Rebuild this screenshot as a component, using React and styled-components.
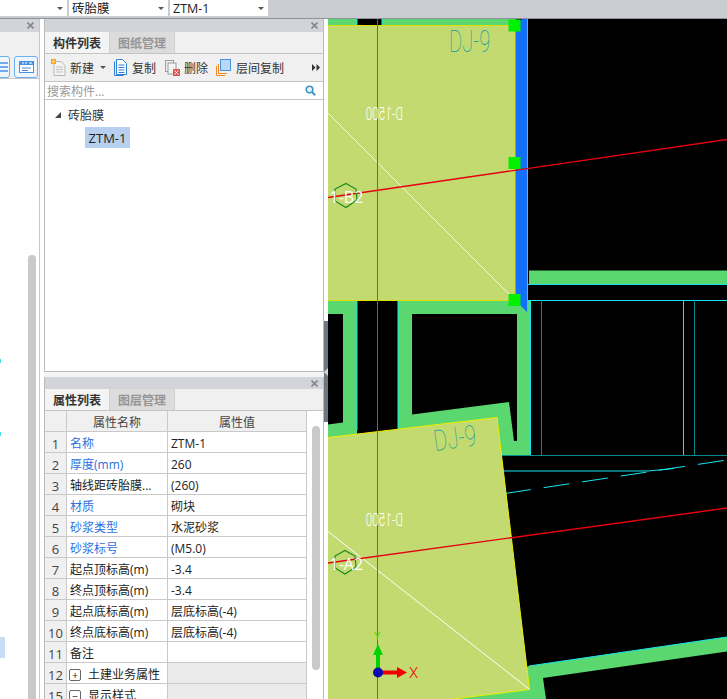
import React from "react";
import styled, { createGlobalStyle } from "styled-components";

const GlobalStyle = createGlobalStyle`
  html, body {
    margin: 0;
    padding: 0;
    background: #fff;
    overflow: hidden;
  }
`;

const FONT = `"Open Sans", "Noto Sans CJK SC", sans-serif`;

const Root = styled.div`
  width: 727px;
  height: 699px;
  overflow: hidden;
  display: flex;
  flex-direction: column;
  font-family: ${FONT};
  font-size: 12px;
  color: #222;
`;
const TopBar = styled.div`
  height: 19px;
  box-sizing: border-box;
  flex-shrink: 0;
  display: flex;
  gap: 2px;
  background: #c9ccd0;
  border-bottom: 1px solid #8f929a;
`;
const Combo = styled.div`
  width: ${(p) => p.$w}px;
  box-sizing: border-box;
  padding-left: 3px;
  background: #fff;
  display: flex;
  align-items: center;
  justify-content: space-between;
  font-size: 12.5px;
  line-height: 15px;
  height: 16px;
  overflow: hidden;
`;
const Caret = styled.span`
  width: 0;
  height: 0;
  margin-right: 4px;
  border-left: 3px solid transparent;
  border-right: 3px solid transparent;
  border-top: 3px solid #555;
`;
const Body = styled.div`
  flex: 1;
  display: flex;
  min-height: 0;
`;
const LeftPanel = styled.div`
  width: 40px;
  box-sizing: border-box;
  flex-shrink: 0;
  border-right: 1px solid #c8c8c8;
  display: flex;
  flex-direction: column;
`;
const TitleBar = styled.div`
  height: ${(p) => p.$h || 13}px;
  flex-shrink: 0;
  background: #d2d4d9;
  display: flex;
  align-items: center;
  justify-content: flex-end;
  padding-right: 5px;
  svg {
    display: block;
  }
`;
const LeftTools = styled.div`
  height: 47px;
  flex-shrink: 0;
  box-sizing: border-box;
  background: #f0f0f0;
  border-bottom: 1px solid #c4c4c4;
  padding: 24px 1px 0 0;
  display: flex;
  justify-content: flex-end;
  gap: 4px;
  overflow: hidden;
`;
const ToolButton = styled.div`
  width: ${(p) => p.$w}px;
  height: 22px;
  flex-shrink: 0;
  box-sizing: border-box;
  border: 1px solid #6db0f2;
  border-radius: 3px;
  background: #eef5fd;
  display: flex;
  align-items: center;
  justify-content: center;
`;
const LeftList = styled.div`
  flex: 1;
  position: relative;
  background: #fff;
`;
const LeftScrollThumb = styled.div`
  position: absolute;
  top: 176px;
  bottom: 0;
  left: 28px;
  width: 8px;
  border-radius: 4px 4px 0 0;
  background: #c9c9c9;
`;
const LeftSelection = styled.div`
  position: absolute;
  top: 558px;
  left: 0;
  width: 5px;
  height: 21px;
  background: #c9dcf5;
`;
const CyanTick = styled.div`
  position: absolute;
  top: ${(p) => p.$top}px;
  left: 0;
  width: 1px;
  height: 4px;
  background: #3fe5f2;
`;
const Gutter = styled.div`
  width: 4px;
  flex-shrink: 0;
  background: #fff;
`;
const MiddleColumn = styled.div`
  width: 280px;
  flex-shrink: 0;
  display: flex;
  flex-direction: column;
`;
const Panel = styled.div`
  display: flex;
  flex-direction: column;
  flex: ${(p) => (p.$grow ? 1 : "none")};
  min-height: 0;
  height: ${(p) => (p.$h ? `${p.$h}px` : "auto")};
  box-sizing: border-box;
  border-left: 1px solid #b9b9b9;
  border-right: 1px solid #b9b9b9;
`;
const TabRow = styled.div`
  height: 22px;
  box-sizing: border-box;
  flex-shrink: 0;
  display: flex;
  background: #f0f0f0;
  border-bottom: 1px solid #c4c4c4;
`;
const Tab = styled.div`
  width: 65px;
  box-sizing: border-box;
  display: flex;
  align-items: center;
  justify-content: center;
  font-weight: 700;
  color: ${(p) => (p.$active ? "#333" : "#959595")};
  background: ${(p) => (p.$active ? "#f4f4f4" : "#dcdcdc")};
  border-right: 1px solid #cfcfcf;
`;
const Toolbar = styled.div`
  height: 28px;
  flex-shrink: 0;
  box-sizing: border-box;
  display: flex;
  align-items: center;
  padding: 0 3px 0 6px;
  background: #f0f0f0;
  border-bottom: 1px solid #c4c4c4;
  color: #333;
`;
const ToolItem = styled.div`
  display: flex;
  align-items: center;
  gap: ${(p) => p.$gap ?? 5}px;
  margin-left: ${(p) => p.$ml ?? 0}px;
  margin-right: ${(p) => p.$mr ?? 8}px;
`;
const MoreIcon = styled.div`
  margin-left: auto;
  margin-right: 0;
  display: flex;
`;
const SearchRow = styled.div`
  height: 18px;
  flex-shrink: 0;
  box-sizing: border-box;
  background: #fff;
  border-bottom: 1px solid #c4c4c4;
  display: flex;
  align-items: center;
  justify-content: space-between;
  padding: 0 7px 0 2px;
  color: #9a9a9a;
`;
const Tree = styled.div`
  flex: 1;
  box-sizing: border-box;
  background: #fff;
  border-bottom: 1px solid #b9b9b9;
  padding-top: 6px;
`;
const TreeRow = styled.div`
  height: 18px;
  display: flex;
  align-items: center;
  padding-left: 10px;
  gap: 7px;
  color: #333;
`;
const TreeArrow = styled.span`
  width: 0;
  height: 0;
  border-left: 6px solid transparent;
  border-bottom: 6px solid #444;
`;
const TreeSelected = styled.div`
  margin: 3px 0 0 40px;
  width: 45px;
  height: 21px;
  background: #b8d0ef;
  display: flex;
  align-items: center;
  justify-content: center;
  font-size: 13px;
`;
const PanelGap = styled.div`
  height: 5px;
  flex-shrink: 0;
  background: #f4f4f4;
`;
const TableArea = styled.div`
  flex: 1;
  min-height: 0;
  display: flex;
  overflow: hidden;
  background: #fff;
`;
const Table = styled.div`
  width: 262px;
  flex-shrink: 0;
  display: grid;
  grid-template-columns: 22px 101px 139px;
  grid-auto-rows: 21px;
`;
const Cell = styled.div`
  box-sizing: border-box;
  display: flex;
  align-items: center;
  padding: 4px 0 0 ${(p) => p.$pl ?? 3}px;
  gap: 7px;
  white-space: nowrap;
  overflow: hidden;
  border-right: 1px solid #c9c9c9;
  border-bottom: 1px solid #c9c9c9;
  line-height: 16px;
  font-size: 12px;
  color: ${(p) => (p.$blue ? "#2c6fe0" : "#222")};
  background: ${(p) => (p.$shade ? "#ebebeb" : "#fff")};
`;
const HeadCell = styled(Cell)`
  justify-content: center;
  padding-left: 0;
  background: #f0f0f0;
  color: #444;
`;
const NumCell = styled(Cell)`
  justify-content: center;
  padding-left: 0;
  background: #f0f0f0;
  color: #444;
  font-size: 13px;
`;
const ExpandBox = styled.span`
  width: 12px;
  height: 12px;
  box-sizing: border-box;
  flex-shrink: 0;
  border: 1px solid #666;
  border-radius: 2px;
  background: #fff;
  display: flex;
  align-items: center;
  justify-content: center;
  font-size: 10px;
  line-height: 9px;
`;
const TableScroll = styled.div`
  flex: 1;
  position: relative;
`;
const TableThumb = styled.div`
  position: absolute;
  top: 15px;
  left: 5px;
  width: 8px;
  height: 244px;
  border-radius: 4px;
  background: #c9c9c9;
`;
const SplitterColumn = styled.div`
  width: 4px;
  flex-shrink: 0;
  display: flex;
  flex-direction: column;
  background: #fff;
`;
const SplitterHandle = styled.div`
  margin-top: 302px;
  height: 101px;
  background: #6e7680;
  display: flex;
  align-items: center;
  svg {
    display: block;
  }
`;
const CanvasBox = styled.div`
  flex: 1;
  min-width: 0;
  background: #000;
  svg {
    display: block;
  }
`;

const rows = [
  ["1", "名称", "ZTM-1", true],
  ["2", "厚度(mm)", "260", true],
  ["3", "轴线距砖胎膜...", "(260)", false],
  ["4", "材质", "砌块", true],
  ["5", "砂浆类型", "水泥砂浆", true],
  ["6", "砂浆标号", "(M5.0)", true],
  ["7", "起点顶标高(m)", "-3.4", false],
  ["8", "终点顶标高(m)", "-3.4", false],
  ["9", "起点底标高(m)", "层底标高(-4)", false],
  ["10", "终点底标高(m)", "层底标高(-4)", false],
  ["11", "备注", "", false],
];

const CloseIcon = () => (
  <svg width="7" height="7" viewBox="0 0 7 7">
    <path d="M.5.5l6 6M6.5.5l-6 6" stroke="#84888e" strokeWidth="1.6" />
  </svg>
);

const NewIcon = () => (
  <svg width="15" height="17" viewBox="0 0 15 17">
    <path d="M3 2.5h7l4 4v10H3z" fill="#f4f4f4" stroke="#b5b5b5" />
    <path d="M5 8h7M5 10.5h7M5 13h7" stroke="#c0c0c0" />
    <rect x="0" y="0" width="5" height="5" fill="#f5a623" />
    <rect x="1.5" y="1.5" width="2" height="2" fill="#ffe9a8" />
  </svg>
);

const CopyIcon = () => (
  <svg width="13" height="17" viewBox="0 0 13 17">
    <path d="M.5 2.5v14h9" fill="none" stroke="#2d7fd3" />
    <path d="M2.5.5h6l4 4v11h-10z" fill="#fff" stroke="#2d7fd3" />
    <path d="M4.5 6h6M4.5 8.5h6M4.5 11h6M4.5 13.5h6" stroke="#2d7fd3" />
  </svg>
);

const DeleteIcon = () => (
  <svg width="15" height="16" viewBox="0 0 15 16">
    <rect x=".5" y=".5" width="8" height="11" fill="#f0f0f0" stroke="#9a9a9a" />
    <rect x="3" y="3" width="8" height="11" fill="#f4f4f4" stroke="#9a9a9a" />
    <rect x="8" y="9" width="7" height="7" fill="#d9534f" />
    <path d="M9.5 10.5l4 4M13.5 10.5l-4 4" stroke="#fff" />
  </svg>
);

const FloorCopyIcon = () => (
  <svg width="15" height="17" viewBox="0 0 15 17">
    <path d="M.5 7v9.5H9" fill="none" stroke="#f08a24" />
    <path d="M2.5 5v9.5H11" fill="none" stroke="#f08a24" />
    <rect x="4.5" y=".5" width="10" height="11" fill="#b9d7f7" stroke="#4a90e2" />
  </svg>
);

const SearchIcon = () => (
  <svg width="11" height="11" viewBox="0 0 11 11">
    <circle cx="4.5" cy="4.5" r="3.3" fill="#e3f1f8" stroke="#3f93c1" strokeWidth="1.6" />
    <path d="M7 7l3.2 3.2" stroke="#3f93c1" strokeWidth="2" />
  </svg>
);

const thinText = { fontFamily: "Roboto, sans-serif", fontWeight: 100 };
const lightText = { fontFamily: "Roboto, sans-serif", fontWeight: 300 };

const CanvasDrawing = () => (
  <svg width="399" height="680" viewBox="328 19 399 680">
    <rect x="328" y="19" width="399" height="680" fill="#000" />
    {/* walls */}
    <g fill="#5ad76e">
      <rect x="328" y="19" width="29" height="7" />
      <rect x="382" y="19" width="134" height="7" />
      <rect x="529" y="270.5" width="198" height="13.5" />
      <path d="M328 300H530.5V455H500V470H328Z" />
      <path d="M529 666L727 637V651.5L543 678L546 699H440Z" />
    </g>
    <g fill="#000">
      <path d="M328 314H343V422.5L328 424.5Z" />
      <rect x="357" y="300" width="41" height="140" />
      <path d="M412 314H517V441H514L509 402L412 414.6Z" />
    </g>
    {/* cyan outlines */}
    <g stroke="#19e6ef" strokeWidth="1" fill="none">
      <path d="M328 25.5H357V19M382 19V25.5M328 300.5H357V430M398 300V429M530.5 300V455" />
      <path d="M517 284.5H727M520 300.5H727" />
      <path d="M683.5 300V455" />
      <path d="M529 666L727 637" />
      <path d="M504 471H648L674 468.5" />
      <path d="M505 493.5L727 460" strokeDasharray="26 13" />
    </g>
    <g stroke="#008c8c" strokeWidth="1" fill="none">
      <path d="M541.5 300V455M694.5 300V455M502 455.5H727" />
    </g>
    {/* selected blue edge */}
    <path d="M515 25L522 19H528V313L520 305L515 300Z" fill="#1270fb" />
    <path d="M527.5 19V313" stroke="#6ea8ff" strokeWidth="1" />
    {/* footing slabs */}
    <rect x="328" y="25.5" width="187" height="275" fill="#c3da70" />
    <path d="M328 25.5H515V300.5H328" fill="none" stroke="#dde000" strokeWidth="1" />
    <path d="M328 437.5L497 417.5L529.5 689.5L453 699H328Z" fill="#c3da70" />
    <path d="M328 437.5L497 417.5L529.5 689.5L453 699" fill="none" stroke="#eeee00" strokeWidth="1" />
    {/* diagonals */}
    <path d="M328 113L509 294" stroke="#f2f6da" strokeWidth="1" />
    <path d="M328 531.5L529 689" stroke="#fff" strokeWidth="1" />
    {/* axis lines */}
    <path d="M328 197.5L727 139.5" stroke="#e4000f" strokeWidth="1.4" />
    <path d="M328 563L727 508" stroke="#e4000f" strokeWidth="1.4" />
    <path d="M377.5 19V699" stroke="#f03020" strokeWidth="1" />
    {/* axis bubbles */}
    <path d="M346 183.5L356 189L357 200L346 207.5L335 201L335 189Z" fill="none" stroke="#1c8a1c" strokeWidth="1.2" />
    <path d="M345 550.5L355 556L356 567L345 574L335 568L335 556Z" fill="none" stroke="#1c8a1c" strokeWidth="1.2" />
    {/* labels */}
    <text transform="translate(403 120) scale(-0.62 1)" style={lightText} fontSize="19" fill="#ffffff">
      D-1500
    </text>
    <text transform="translate(403 526) scale(-0.62 1)" style={lightText} fontSize="19" fill="#ffffff">
      D-1500
    </text>
    <text transform="translate(449 52) scale(0.65 1)" style={thinText} fontSize="31" fill="#0f9c9c">
      DJ-9
    </text>
    <text transform="translate(435 451) rotate(-8) scale(0.72 1)" style={thinText} fontSize="29" fill="#0f9c9c">
      DJ-9
    </text>
    <text x="329.5" y="203" fontFamily="Open Sans, sans-serif" fontSize="16" fill="#fff">
      1-B2
    </text>
    <text x="329.5" y="570" fontFamily="Open Sans, sans-serif" fontSize="16" fill="#fff">
      1-A2
    </text>
    {/* handles */}
    <g fill="#00f000">
      <rect x="508.5" y="19.5" width="12" height="12" />
      <rect x="508.5" y="157" width="12" height="12" />
      <rect x="508.5" y="294" width="12" height="12" />
    </g>
    {/* origin gizmo */}
    <path d="M378 672V654" stroke="#00d400" strokeWidth="4" />
    <path d="M373 655L378 644L383 655Z" fill="#00d400" />
    <path d="M378 672.5H398" stroke="#f00000" strokeWidth="4" />
    <path d="M397 667L407 672.5L397 678Z" fill="#f00000" />
    <circle cx="378" cy="672.5" r="5" fill="#0a0ab0" />
    <text x="409" y="678" style={lightText} fontSize="15" fill="#f00000">
      X
    </text>
    <text x="374" y="640" fontFamily="Liberation Sans, sans-serif" fontSize="10" fill="#44e000">
      Y
    </text>
  </svg>
);

const App = () => {
  return (
    <Root>
      <GlobalStyle />
      <TopBar>
        <Combo $w={67}>
          <span />
          <Caret />
        </Combo>
        <Combo $w={99}>
          砖胎膜
          <Caret />
        </Combo>
        <Combo $w={98}>
          ZTM-1
          <Caret />
        </Combo>
      </TopBar>
      <Body>
        <LeftPanel>
          <TitleBar>
            <CloseIcon />
          </TitleBar>
          <LeftTools>
            <ToolButton $w={16}>
              <svg width="14" height="12" viewBox="0 0 14 12">
                <path d="M1 2h12M1 6h12M1 10h12" stroke="#4a90e2" strokeWidth="1.4" />
              </svg>
            </ToolButton>
            <ToolButton $w={24}>
              <svg width="15" height="12" viewBox="0 0 15 12">
                <rect x=".5" y=".5" width="14" height="11" fill="#fff" stroke="#4a90e2" />
                <rect x="0" y="0" width="15" height="4" fill="#4a90e2" />
                <path d="M3 2h2M6 2h2M10 2h3" stroke="#fff" />
                <path d="M3 7h9M3 9.5h6" stroke="#4a90e2" />
              </svg>
            </ToolButton>
          </LeftTools>
          <LeftList>
            <LeftScrollThumb />
            <LeftSelection />
            <CyanTick $top={280} />
            <CyanTick $top={353} />
          </LeftList>
        </LeftPanel>
        <Gutter />
        <MiddleColumn>
          <Panel $h={353}>
            <TitleBar>
              <CloseIcon />
            </TitleBar>
            <TabRow>
              <Tab $active>构件列表</Tab>
              <Tab>图纸管理</Tab>
            </TabRow>
            <Toolbar>
              <ToolItem $gap={4} $mr={6}>
                <NewIcon />
                新建
              </ToolItem>
              <Caret />
              <ToolItem $ml={4} $mr={9}>
                <CopyIcon />
                复制
              </ToolItem>
              <ToolItem $gap={4} $mr={8}>
                <DeleteIcon />
                删除
              </ToolItem>
              <ToolItem $gap={5} $mr={0}>
                <FloorCopyIcon />
                层间复制
              </ToolItem>
              <MoreIcon>
                <svg width="8" height="7" viewBox="0 0 8 7">
                  <path d="M0 0l3.5 3.5L0 7zM4.5 0L8 3.5 4.5 7z" fill="#333" />
                </svg>
              </MoreIcon>
            </Toolbar>
            <SearchRow>
              搜索构件...
              <SearchIcon />
            </SearchRow>
            <Tree>
              <TreeRow>
                <TreeArrow />
                砖胎膜
              </TreeRow>
              <TreeSelected>ZTM-1</TreeSelected>
            </Tree>
          </Panel>
          <PanelGap />
          <Panel $grow>
            <TitleBar $h={12}>
              <CloseIcon />
            </TitleBar>
            <TabRow>
              <Tab $active>属性列表</Tab>
              <Tab>图层管理</Tab>
            </TabRow>
            <TableArea>
              <Table>
                <HeadCell />
                <HeadCell>属性名称</HeadCell>
                <HeadCell>属性值</HeadCell>
                {rows.map(([num, name, value, blue]) => (
                  <React.Fragment key={num}>
                    <NumCell>{num}</NumCell>
                    <Cell $blue={blue}>{name}</Cell>
                    <Cell>{value}</Cell>
                  </React.Fragment>
                ))}
                <NumCell>12</NumCell>
                <Cell $pl={2}>
                  <ExpandBox>+</ExpandBox>
                  土建业务属性
                </Cell>
                <Cell $shade />
                <NumCell>15</NumCell>
                <Cell $pl={2}>
                  <ExpandBox>−</ExpandBox>
                  显示样式
                </Cell>
                <Cell $shade />
              </Table>
              <TableScroll>
                <TableThumb />
              </TableScroll>
            </TableArea>
          </Panel>
        </MiddleColumn>
        <SplitterColumn>
          <SplitterHandle>
            <svg width="4" height="8" viewBox="0 0 4 8">
              <path d="M4 0L0 4l4 4z" fill="#d5d8dc" />
            </svg>
          </SplitterHandle>
        </SplitterColumn>
        <CanvasBox>
          <CanvasDrawing />
        </CanvasBox>
      </Body>
    </Root>
  );
};

export default App;
